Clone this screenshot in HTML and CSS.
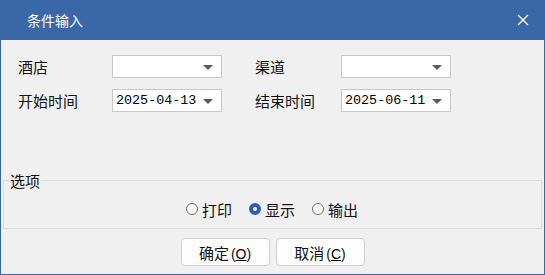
FILE: index.html
```html
<!DOCTYPE html>
<html lang="zh-CN">
<head>
  <meta charset="UTF-8" />
  <title>条件输入</title>
  <link rel="stylesheet" href="styles.css">
</head>
<body>

  <div class="window">
    <!-- Title bar -->
    <div class="titlebar">
      <span class="title">条件输入</span>
      <span class="close">
        <svg width="12" height="12" viewBox="0 0 12 12">
          <path d="M1 1 L11 11 M11 1 L1 11" stroke="#fff" stroke-width="1.3" fill="none" />
        </svg>
      </span>
    </div>

    <!-- Query fields -->
    <div class="fields">
      <label>酒店</label>
      <div class="combo"><span class="value"></span><span class="arrow"></span></div>
      <span></span>
      <label>渠道</label>
      <div class="combo"><span class="value"></span><span class="arrow"></span></div>

      <label>开始时间</label>
      <div class="combo"><span class="value">2025-04-13</span><span class="arrow"></span></div>
      <span></span>
      <label>结束时间</label>
      <div class="combo"><span class="value">2025-06-11</span><span class="arrow"></span></div>
    </div>

    <!-- Options -->
    <fieldset class="options">
      <legend>选项</legend>
      <div class="radios">
        <span class="radio"><span class="dot"></span>打印</span>
        <span class="radio"><span class="dot checked"></span>显示</span>
        <span class="radio"><span class="dot"></span>输出</span>
      </div>
    </fieldset>

    <div class="buttons">
      <button type="button">确定<span class="key">(<u>O</u>)</span></button>
      <button type="button">取消<span class="key">(<u>C</u>)</span></button>
    </div>
  </div>

</body>
</html>
```

FILE: styles.css
```css
body {
  margin: 0;
  font-family: "Noto Sans CJK SC", "Noto Sans", sans-serif;
  background-color: #f0f0f0;
}
.window {
  width: 545px;
  height: 275px;
  box-sizing: border-box;
  border: 1px solid #3a67a8;
  border-top: none;
  background: #f0f0f0;
  color: #111;
}
.titlebar {
  height: 40px;
  margin: 0 -1px;
  background: #3a67a8;
  color: #fff;
  display: flex;
  align-items: center;
  justify-content: space-between;
  padding: 0 16px 0 27px;
}
.title {
  font-size: 14px;
  line-height: 18px;
}
.close {
  display: flex;
}
.fields {
  display: grid;
  grid-template-columns: 94px 110px 33px 86px 110px;
  grid-auto-rows: 23px;
  row-gap: 11px;
  padding-left: 17px;
  margin-top: 15px;
}
.fields label {
  font-size: 15px;
  line-height: 23px;
}
.combo {
  box-sizing: border-box;
  border: 1px solid #c8c8c8;
  background: #fff;
  display: flex;
  align-items: center;
  justify-content: space-between;
  padding: 0 8px 0 3px;
}
.value {
  font-family: "Liberation Mono", monospace;
  font-size: 13.4px;
  color: #000;
}
.arrow {
  width: 0;
  height: 0;
  border-left: 5px solid transparent;
  border-right: 5px solid transparent;
  border-top: 5px solid #5a5a5a;
  margin-top: 2px;
}
.options {
  margin: 60px 2px 0;
  padding: 10px 0 9px;
  border: 1px solid #dcdcdc;
}
.options legend {
  font-size: 15px;
  line-height: 17px;
  padding: 0 1px;
  margin-left: 5px;
}
.radios {
  display: flex;
  justify-content: center;
  gap: 17px;
  height: 20px;
  align-items: center;
  font-size: 15px;
  padding-right: 1px;
}
.radio {
  display: flex;
  align-items: center;
  gap: 4px;
}
.dot {
  width: 12px;
  height: 12px;
  box-sizing: border-box;
  border-radius: 50%;
  border: 1px solid #6e6e6e;
  background: #fafafa;
}
.dot.checked {
  border: 4px solid #2c5fb4;
  background: #fff;
}
.buttons {
  display: flex;
  justify-content: center;
  gap: 6px;
  margin-top: 9px;
}
button {
  width: 89px;
  height: 28px;
  border: 1px solid #cfcfcf;
  border-radius: 4px;
  background: #fdfdfd;
  font-family: "Noto Sans CJK SC", sans-serif;
  font-size: 15px;
  color: #111;
  padding: 0;
}
.key {
  font-family: "Liberation Sans", sans-serif;
  font-size: 14px;
  margin-left: 2px;
}
.key u {
  color: #000;
}
```
